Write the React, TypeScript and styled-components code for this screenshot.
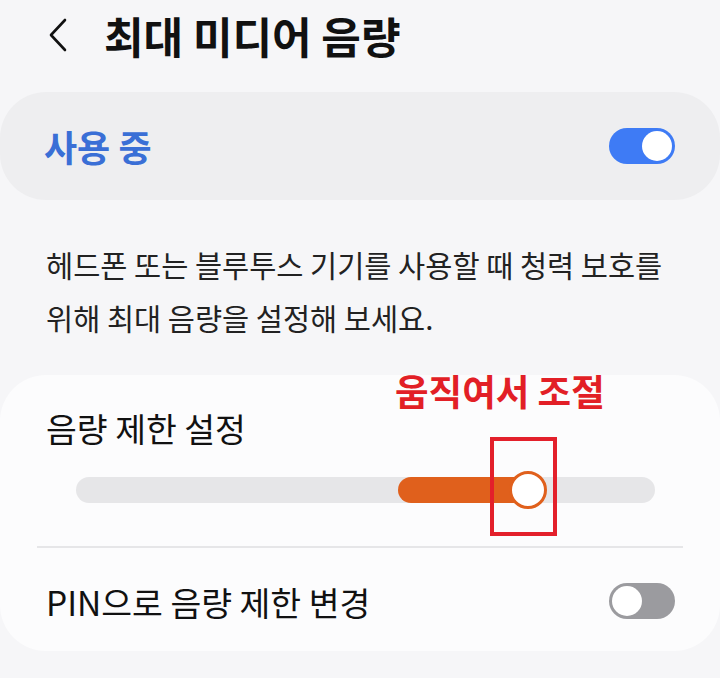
import React from 'react';
import styled, { createGlobalStyle } from 'styled-components';

const GlobalStyle = createGlobalStyle`
  body {
    margin: 0;
    background: #f6f6f8;
    font-family: 'Noto Sans CJK KR', 'Noto Sans', sans-serif;
    color: #111;
  }
`;

const Page = styled.div`
  width: 720px;
  height: 678px;
  overflow: hidden;
  background: #f6f6f8;
`;

const Header = styled.header`
  display: flex;
  align-items: center;
  height: 70px;
  padding-left: 48px;
`;

const BackButton = styled.button`
  display: flex;
  align-items: center;
  border: 0;
  background: none;
  padding: 0;
  margin-right: 36px;
`;

const Title = styled.h1`
  margin: 0;
  font-size: 43px;
  line-height: 50px;
  font-weight: 700;
`;

const MasterCard = styled.div`
  display: flex;
  align-items: center;
  justify-content: space-between;
  height: 108px;
  margin-top: 22px;
  padding: 0 45px 0 44px;
  border-radius: 46px;
  background: #eeeef0;
`;

const MasterLabel = styled.span`
  font-size: 36px;
  line-height: 44px;
  font-weight: 700;
  color: #3a6fd6;
`;

const Toggle = styled.span<{ on: boolean }>`
  display: flex;
  align-items: center;
  justify-content: ${({ on }) => (on ? 'flex-end' : 'flex-start')};
  width: 66px;
  height: 36px;
  padding: 3px;
  box-sizing: border-box;
  border-radius: 18px;
  background: ${({ on }) => (on ? '#3e7bf5' : '#9b9b9f')};
`;

const Knob = styled.span`
  width: 30px;
  height: 30px;
  border-radius: 50%;
  background: #fff;
`;

const Description = styled.p`
  margin: 0;
  padding: 38px 10px 0 46px;
  font-size: 29.5px;
  line-height: 53px;
  color: #222;
`;

const LimitCard = styled.div`
  position: relative;
  margin-top: 31px;
  padding: 33px 0 20px;
  border-radius: 46px;
  background: #fcfcfd;
`;

const RowLabel = styled.div`
  padding-left: 46px;
  font-size: 33.5px;
  line-height: 40px;
`;

const SliderRow = styled.div`
  position: relative;
  display: flex;
  align-items: center;
  height: 40px;
  margin: 22px 65px 0 76px;
`;

const Track = styled.div`
  position: relative;
  flex: 1;
  height: 26px;
  border-radius: 13px;
  background: #e6e6e8;
`;

const Fill = styled.div`
  position: absolute;
  top: 0;
  bottom: 0;
  border-radius: 13px;
  background: #e0601c;
`;

const Thumb = styled.div`
  position: absolute;
  top: 50%;
  width: 38px;
  height: 38px;
  box-sizing: border-box;
  border: 3px solid #e0601c;
  border-radius: 50%;
  background: #fff;
  transform: translate(-50%, -50%);
`;

const Divider = styled.hr`
  margin: 36px 37px 0;
  border: 0;
  border-top: 2px solid #e6e6e8;
`;

const PinRow = styled.div`
  display: flex;
  align-items: center;
  justify-content: space-between;
  height: 60px;
  margin-top: 23px;
  padding: 0 45px 0 46px;
  font-size: 33.5px;
`;

const Hint = styled.span`
  position: absolute;
  top: -4px;
  left: 395px;
  font-size: 36.5px;
  line-height: 40px;
  font-weight: 700;
  color: #e21f26;
`;

const HintBox = styled.div`
  position: absolute;
  top: 62px;
  left: 490px;
  width: 67px;
  height: 99px;
  box-sizing: border-box;
  border: 4px solid #e3202b;
`;

const fillStart = 55.6;
const value = 78;

export default function App() {
  return (
    <Page>
      <GlobalStyle />
      <Header>
        <BackButton>
          <svg width="20" height="34" viewBox="0 0 20 34">
            <path d="M17 2 L3 17 L17 32" fill="none" stroke="#111" strokeWidth="2.6" strokeLinecap="round" strokeLinejoin="round" />
          </svg>
        </BackButton>
        <Title>최대 미디어 음량</Title>
      </Header>

      <MasterCard>
        <MasterLabel>사용 중</MasterLabel>
        <Toggle on>
          <Knob />
        </Toggle>
      </MasterCard>

      <Description>
        헤드폰 또는 블루투스 기기를 사용할 때 청력 보호를
        <br />
        위해 최대 음량을 설정해 보세요.
      </Description>

      <LimitCard>
        <RowLabel>음량 제한 설정</RowLabel>
        <SliderRow>
          <Track>
            <Fill style={{ left: `${fillStart}%`, right: `${100 - value}%` }} />
            <Thumb style={{ left: `${value}%` }} />
          </Track>
        </SliderRow>
        <Divider />
        <PinRow>
          <span>PIN으로 음량 제한 변경</span>
          <Toggle on={false}>
            <Knob />
          </Toggle>
        </PinRow>

        <Hint>움직여서 조절</Hint>
        <HintBox />
      </LimitCard>
    </Page>
  );
}
